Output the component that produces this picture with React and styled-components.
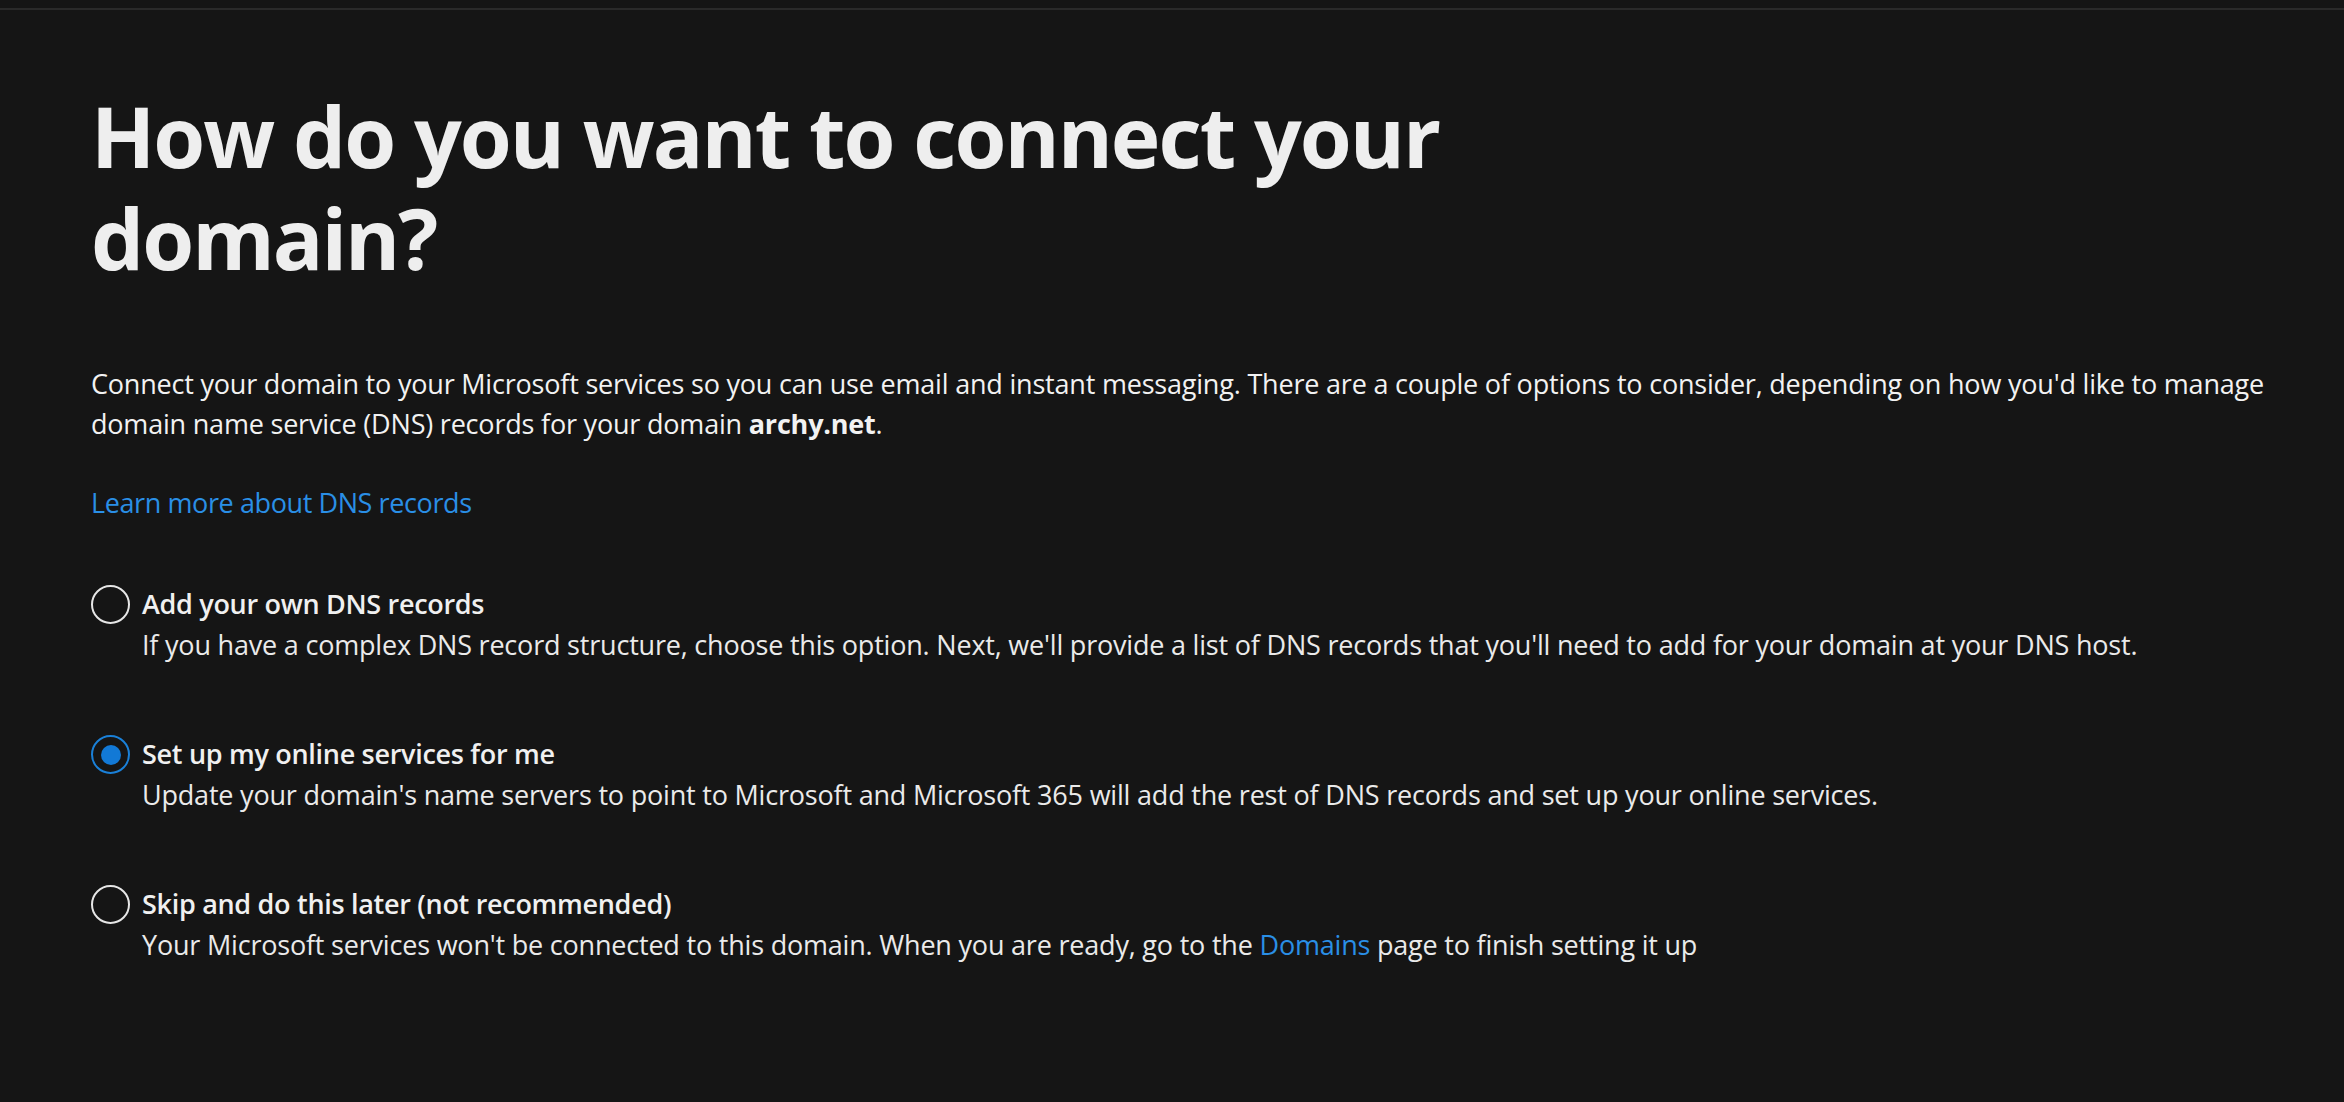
import styled, { createGlobalStyle } from "styled-components";

const GlobalStyle = createGlobalStyle`
    html, body {
        margin: 0;
        padding: 0;
        background: #151515;
    }
    body {
        font-family: "Open Sans", "Noto Sans", sans-serif;
        color: #f0f0f0;
    }
`;

export default function App(){

    const selected = "online";

    const options = [
        {
            id: "own",
            title: "Add your own DNS records",
            text: "If you have a complex DNS record structure, choose this option. Next, we'll provide a list of DNS records that you'll need to add for your domain at your DNS host."
        },
        {
            id: "online",
            title: "Set up my online services for me",
            text: "Update your domain's name servers to point to Microsoft and Microsoft 365 will add the rest of DNS records and set up your online services."
        },
        {
            id: "skip",
            title: "Skip and do this later (not recommended)",
            text: (
                <>
                    Your Microsoft services won't be connected to this domain. When you are ready, go to the <Link href="#">Domains</Link> page to finish setting it up
                </>
            )
        }
    ];

    return(
        <>
            <GlobalStyle/>
            <TopBar/>
            <Page>
                <Title>How do you want to connect your domain?</Title>

                <Intro>
                    Connect your domain to your Microsoft services so you can use email and instant messaging. There are a couple of options to consider, depending on how you'd like to manage domain name service (DNS) records for your domain <Domain>archy.net</Domain>.
                </Intro>

                <LearnMore>
                    <Link href="#">Learn more about DNS records</Link>
                </LearnMore>

                <OptionList>
                    {options.map(option => (
                        <Option key={option.id}>
                            <Radio checked={option.id === selected}/>
                            <OptionBody>
                                <OptionTitle>{option.title}</OptionTitle>
                                <OptionText>{option.text}</OptionText>
                            </OptionBody>
                        </Option>
                    ))}
                </OptionList>
            </Page>
        </>
    );
}

const TopBar = styled.div`
    height: 8px;
    border-bottom: 2px solid #2a2a2a;
`;

const Page = styled.main`
    padding: 0 36px 0 91px;
    min-height: 1092px;
    box-sizing: border-box;
`;

const Title = styled.h1`
    max-width: 1460px;
    margin: 0;
    padding-top: 75px;
    font-size: 84px;
    line-height: 102px;
    font-weight: 700;
    letter-spacing: -2px;
    color: #eeeeee;
`;

const Intro = styled.p`
    margin: 0;
    padding-top: 75px;
    font-size: 27px;
    line-height: 40px;
    letter-spacing: -0.2px;
    color: #f2f2f2;
`;

const Domain = styled.b`
    font-weight: 700;
`;

const LearnMore = styled.div`
    padding-top: 39px;
    font-size: 27px;
    line-height: 40px;
    letter-spacing: -0.4px;
`;

const Link = styled.a`
    color: #2a8fe6;
    text-decoration: none;
`;

const OptionList = styled.div`
    padding-top: 60px;
    display: flex;
    flex-direction: column;
    gap: 68px;
`;

const Option = styled.div`
    display: flex;
    flex-direction: row;
    align-items: flex-start;
    gap: 12px;
`;

const Radio = styled.span`
    flex: none;
    width: 39px;
    height: 39px;
    margin-top: 2px;
    box-sizing: border-box;
    border-radius: 50%;
    border: 2px solid ${props => props.checked ? "#1a80d8" : "#e6e6e6"};
    display: flex;
    align-items: center;
    justify-content: center;

    &::after{
        content: "";
        display: ${props => props.checked ? "block" : "none"};
        width: 20px;
        height: 20px;
        border-radius: 50%;
        background: #1279d6;
    }
`;

const OptionBody = styled.div`
    display: flex;
    flex-direction: column;
`;

const OptionTitle = styled.div`
    font-size: 27px;
    line-height: 42px;
    font-weight: 600;
    letter-spacing: -0.3px;
    color: #f0f0f0;
`;

const OptionText = styled.div`
    font-size: 27px;
    line-height: 40px;
    letter-spacing: -0.2px;
    color: #eaeaea;
`;
